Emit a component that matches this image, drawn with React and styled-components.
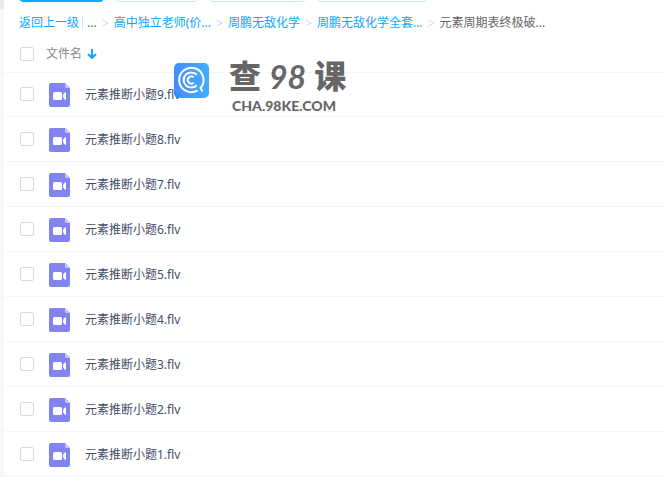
import { useState } from 'react';
import styled, { createGlobalStyle } from 'styled-components';

const GlobalStyle = createGlobalStyle`
  * {
    box-sizing: border-box;
  }

  body {
    margin: 0;
    background: #ffffff;
    font-family: 'Noto Sans', 'Noto Sans CJK SC', sans-serif;
    font-size: 12px;
    line-height: 18px;
    color: #424e67;
  }
`;

const Page = styled.div`
  position: relative;
  display: flex;
  min-height: 100vh;
`;

const Sidebar = styled.aside`
  flex: 0 0 4px;
  background: linear-gradient(#e9e9e9 9px, #f7f7f7 9px);
`;

const Main = styled.main`
  flex: 1;
  min-width: 0;
`;

// only the lower edge of the toolbar stays visible while scrolled
const Toolbar = styled.div`
  display: flex;
  align-items: flex-end;
  gap: 11px;
  height: 2px;
  padding-left: 15px;
  overflow: hidden;
`;

const ToolButton = styled.button`
  flex: none;
  width: ${(props) => props.$width}px;
  height: 32px;
  margin: 0;
  border: 1px solid ${(props) => (props.$primary ? '#09aaff' : '#c3eaff')};
  border-radius: 4px;
  background: ${(props) => (props.$primary ? '#09aaff' : '#ffffff')};
`;

const Breadcrumb = styled.nav`
  display: flex;
  align-items: center;
  height: 40px;
  padding: 2px 0 0 15px;
  white-space: nowrap;
`;

const Crumb = styled.a`
  color: #09aaff;
  text-decoration: none;
`;

const CurrentCrumb = styled.span`
  color: #666666;
`;

const Divider = styled.span`
  width: 1px;
  height: 12px;
  margin: 0 4px 0 3px;
  background: #c3eaff;
`;

const Chevron = styled.svg`
  flex: none;
  width: 7px;
  height: 8px;
  margin: 0 5px;
  fill: none;
  stroke: #c4dbfe;
`;

const ListHeader = styled.div`
  display: flex;
  align-items: center;
  height: 31px;
  padding: 0 0 6px 16px;
  border-bottom: 1px solid #f2f6fd;
`;

const Checkbox = styled.input`
  appearance: none;
  flex: none;
  width: 14px;
  height: 14px;
  margin: 0;
  border: 1px solid #d3d9e6;
  border-radius: 2px;
  background: #ffffff;

  &:checked {
    border-color: #09aaff;
    background: #09aaff;
  }
`;

const SortButton = styled.button`
  display: flex;
  align-items: center;
  gap: 5px;
  margin-left: 12px;
  padding: 0;
  border: 0;
  background: none;
  color: #888888;
  font: inherit;
`;

const FileList = styled.ul`
  margin: -1px 0 0;
  padding: 0;
  list-style: none;
`;

const FileRow = styled.li`
  display: flex;
  align-items: center;
  height: 45px;
  padding-left: 16px;
  border-bottom: 1px solid #f2f6fd;
`;

const FileLabel = styled.label`
  display: flex;
  align-items: center;
  gap: 15px;
  margin-left: 15px;
  padding-top: 2px;
`;

const Watermark = styled.div`
  position: absolute;
  top: 56px;
  left: 174px;
  display: flex;
  align-items: flex-start;
  gap: 20px;
  color: #666666;
  pointer-events: none;

  svg {
    margin-top: 7px;
    opacity: 0.9;
  }
`;

const Brand = styled.div`
  display: flex;
  flex-direction: column;
`;

const BrandName = styled.div`
  display: flex;
  gap: 8px;
  font-family: 'Noto Sans CJK SC', sans-serif;
  font-size: 32px;
  font-weight: 900;
  line-height: 36px;

  em {
    font-family: Lato, sans-serif;
    font-weight: 700;
    line-height: 42px;
  }
`;

const BrandUrl = styled.div`
  padding-left: 3px;
  font-family: Lato, sans-serif;
  font-size: 14px;
  font-weight: 900;
  line-height: 16px;
`;

const tools = [
  { name: '上传', width: 85, primary: true },
  { name: '新建', width: 83 },
  { name: '离线下载', width: 97 },
  { name: '我的设备', width: 110 },
];

const crumbs = ['高中独立老师(价...', '周鹏无敌化学', '周鹏无敌化学全套...'];

const files = [9, 8, 7, 6, 5, 4, 3, 2, 1].map((n) => `元素推断小题${n}.flv`);

const Separator = () => (
  <Chevron viewBox="0 0 7 8" aria-hidden="true">
    <path d="M0.5 1L6.3 4L0.5 7" />
  </Chevron>
);

const SortArrow = () => (
  <svg width="10" height="10" viewBox="0 0 10 10" fill="none" stroke="#09aaff" strokeWidth="2" aria-hidden="true">
    <path d="M5 0V9M1 5L5 9L9 5" />
  </svg>
);

const VideoIcon = () => (
  <svg width="21" height="24" viewBox="0 0 21 24" aria-hidden="true">
    <path d="M2 0H16L21 5V22Q21 24 19 24H2Q0 24 0 22V2Q0 0 2 0Z" fill="#8183f1" />
    <path d="M16 0L21 5H17.5Q16 5 16 3.5Z" fill="#c5c6fa" />
    <rect x="4" y="9" width="9" height="8" rx="1.5" fill="#ffffff" />
    <path d="M17 9V17Q14 16 14 13Q14 10 17 9Z" fill="#ffffff" />
  </svg>
);

const BrandLogo = () => (
  <svg width="35" height="35" viewBox="0 0 35 35" fill="none" aria-hidden="true">
    <defs>
      <linearGradient id="brand" x1="0" y1="0" x2="1" y2="0">
        <stop offset="0" stopColor="#3080ff" />
        <stop offset="1" stopColor="#2fa5ff" />
      </linearGradient>
    </defs>
    <rect width="35" height="35" rx="5" fill="url(#brand)" />
    <g stroke="#ffffff" strokeWidth="2">
      <path d="M23.6 27.4A12.2 12.2 0 1 1 26.5 25L28.5 28.5" />
      <path d="M22.8 11.8A7.6 7.6 0 1 0 22.8 22.2" />
      <path d="M19.7 14.3A3.6 3.6 0 1 0 19.7 19.7" />
    </g>
  </svg>
);

const App = () => {
  const [selected, setSelected] = useState([]);

  const toggle = (name) => {
    setSelected((prev) => (prev.includes(name) ? prev.filter((item) => item !== name) : [...prev, name]));
  };

  const toggleAll = (e) => {
    setSelected(e.target.checked ? files : []);
  };

  return (
    <>
      <GlobalStyle />
      <Page>
        <Sidebar />
        <Main>
          <Toolbar>
            {tools.map((tool) => (
              <ToolButton
                key={tool.name}
                type="button"
                aria-label={tool.name}
                $width={tool.width}
                $primary={tool.primary}
              />
            ))}
          </Toolbar>
          <Breadcrumb>
            <Crumb href="#back">返回上一级</Crumb>
            <Divider />
            <CurrentCrumb>...</CurrentCrumb>
            <Separator />
            {crumbs.map((crumb) => (
              <span key={crumb}>
                <Crumb href="#folder">{crumb}</Crumb>
                <Separator />
              </span>
            ))}
            <CurrentCrumb>元素周期表终极破...</CurrentCrumb>
          </Breadcrumb>
          <ListHeader>
            <Checkbox
              type="checkbox"
              aria-label="全选"
              checked={selected.length === files.length}
              onChange={toggleAll}
            />
            <SortButton type="button">
              文件名
              <SortArrow />
            </SortButton>
          </ListHeader>
          <FileList>
            {files.map((name) => (
              <FileRow key={name}>
                <Checkbox
                  type="checkbox"
                  id={name}
                  checked={selected.includes(name)}
                  onChange={() => toggle(name)}
                />
                <FileLabel htmlFor={name}>
                  <VideoIcon />
                  {name}
                </FileLabel>
              </FileRow>
            ))}
          </FileList>
        </Main>
        <Watermark>
          <BrandLogo />
          <Brand>
            <BrandName>
              <span>查</span>
              <em>98</em>
              <span>课</span>
            </BrandName>
            <BrandUrl>CHA.98KE.COM</BrandUrl>
          </Brand>
        </Watermark>
      </Page>
    </>
  );
};

export default App;
